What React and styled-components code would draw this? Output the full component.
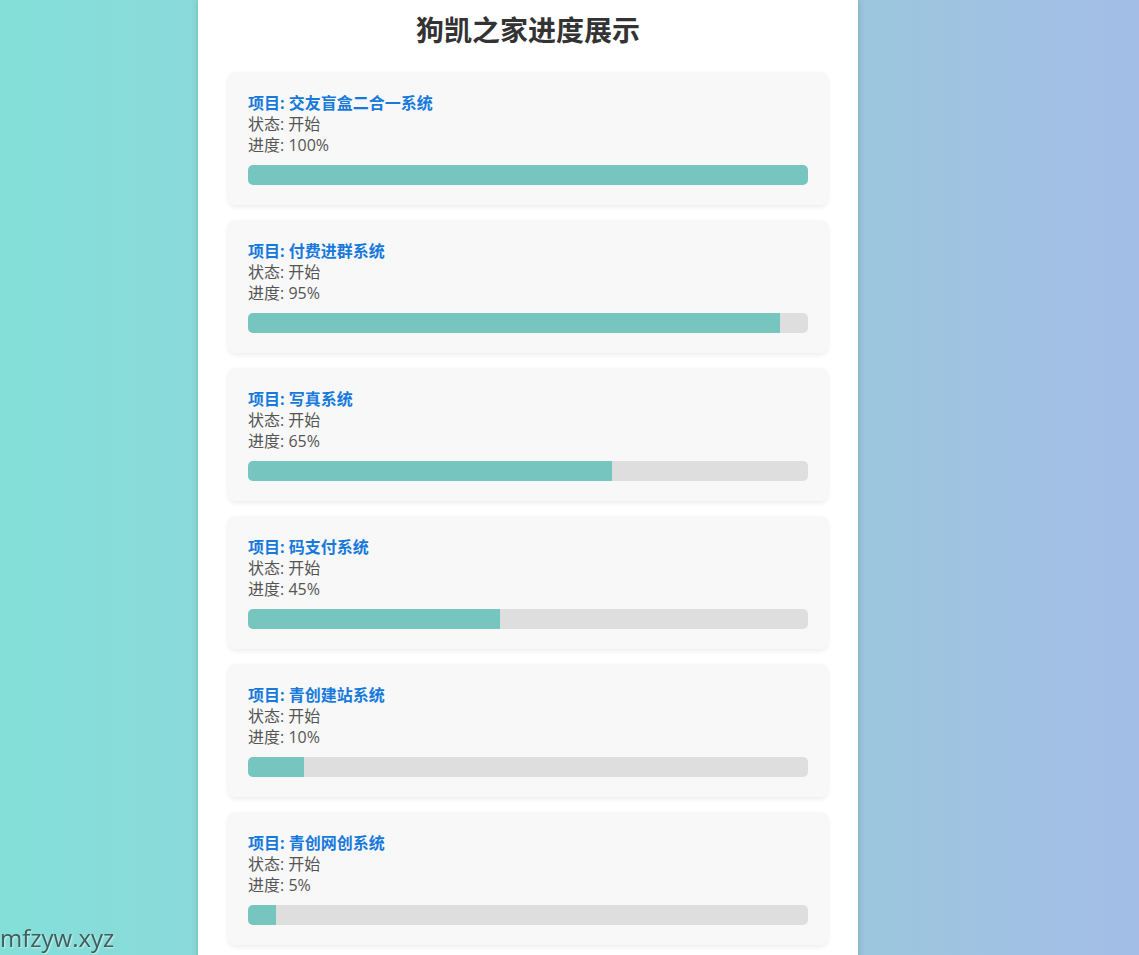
import { createGlobalStyle, styled } from "styled-components";

const GlobalStyle = createGlobalStyle`
  html, body {
    margin: 0;
    padding: 0;
  }
  body {
    min-height: 955px;
    background: linear-gradient(to right, #84dfd9 0%, #9bc6dd 75%, #a3bde6 100%);
    font-family: "Open Sans", "Noto Sans CJK SC", sans-serif;
  }
`;

const Page = styled.div`
  display: flex;
  padding-left: 198px;
`;

const Panel = styled.main`
  width: 600px;
  padding: 13px 30px 10px;
  background: #fff;
  box-shadow: 0 0 6px rgba(0, 0, 0, 0.18);
`;

const Title = styled.h1`
  margin: 0 0 25px;
  text-align: center;
  font-size: 28px;
  line-height: 34px;
  font-weight: 700;
  color: #333;
`;

const Card = styled.section`
  background: #f8f8f8;
  border-radius: 8px;
  padding: 21px 20px 20px;
  margin-bottom: 15px;
  box-shadow: 0 2px 5px rgba(0, 0, 0, 0.08);
`;

const Name = styled.h3`
  margin: 0;
  font-size: 16px;
  line-height: 21px;
  font-weight: 700;
  color: #1779dc;
`;

const Line = styled.p`
  margin: 0;
  font-size: 16px;
  line-height: 21px;
  color: #555;
`;

const Track = styled.div`
  margin-top: 9px;
  height: 20px;
  border-radius: 5px;
  background: #dedede;
  overflow: hidden;
`;

const Fill = styled.div`
  height: 100%;
  background: #76c6bf;
`;

const Site = styled.div`
  position: fixed;
  left: 0;
  bottom: 1px;
  font-size: 24px;
  color: #3f5e5c;
  text-shadow: 1px 1px 2px rgba(255, 255, 255, 0.6);
`;

const projects = [
  { name: "交友盲盒二合一系统", progress: 100 },
  { name: "付费进群系统", progress: 95 },
  { name: "写真系统", progress: 65 },
  { name: "码支付系统", progress: 45 },
  { name: "青创建站系统", progress: 10 },
  { name: "青创网创系统", progress: 5 },
];

export default function App() {
  return (
    <>
      <GlobalStyle />
      <Page>
        <Panel>
          <Title>狗凯之家进度展示</Title>
          {projects.map((p) => (
            <Card key={p.name}>
              <Name>项目: {p.name}</Name>
              <Line>状态: 开始</Line>
              <Line>进度: {p.progress}%</Line>
              <Track>
                <Fill style={{ width: `${p.progress}%` }} />
              </Track>
            </Card>
          ))}
        </Panel>
      </Page>
      <Site>mfzyw.xyz</Site>
    </>
  );
}
